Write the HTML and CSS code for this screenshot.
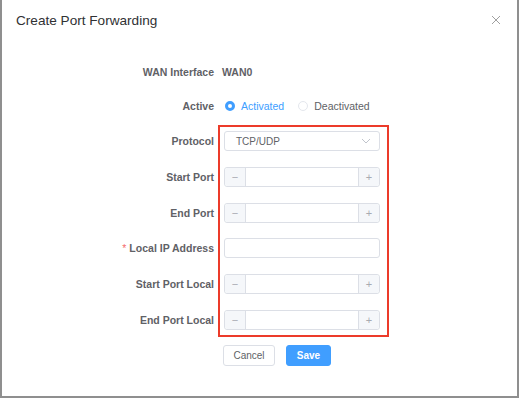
FILE: index.html
```html
<!DOCTYPE html>
<html lang="en">
<head>
  <meta charset="UTF-8">
  <title>Create Port Forwarding</title>
  <link rel="stylesheet" href="styles.css">
</head>
<body>
  <div class="dialog">
    <div class="dialog-header">
      <span class="dialog-title">Create Port Forwarding</span>
      <svg class="close" width="10" height="10" viewBox="0 0 10 10">
        <path d="M1 1L9 9M9 1L1 9" stroke="#a0a0a0" stroke-width="1" fill="none"/>
      </svg>
    </div>

    <form class="form">
      <div class="row row-wan">
        <label class="label">WAN Interface</label>
        <span class="value">WAN0</span>
      </div>

      <div class="row row-active">
        <label class="label">Active</label>
        <div class="radios">
          <span class="radio checked"><i></i>Activated</span>
          <span class="radio"><i></i>Deactivated</span>
        </div>
      </div>

      <div class="highlight"></div>

      <div class="row">
        <label class="label">Protocol</label>
        <div class="select">
          <span>TCP/UDP</span>
          <svg width="10" height="6" viewBox="0 0 10 6"><path d="M1 1L5 5L9 1" stroke="#c0c4cc" stroke-width="1" fill="none"/></svg>
        </div>
      </div>

      <div class="row">
        <label class="label">Start Port</label>
        <div class="number"><span class="btn-minus">&minus;</span><span class="num-field"></span><span class="btn-plus">+</span></div>
      </div>

      <div class="row row-tight">
        <label class="label">End Port</label>
        <div class="number"><span class="btn-minus">&minus;</span><span class="num-field"></span><span class="btn-plus">+</span></div>
      </div>

      <div class="row">
        <label class="label"><span class="req">*</span> Local IP Address</label>
        <div class="input"></div>
      </div>

      <div class="row">
        <label class="label">Start Port Local</label>
        <div class="number"><span class="btn-minus">&minus;</span><span class="num-field"></span><span class="btn-plus">+</span></div>
      </div>

      <div class="row">
        <label class="label">End Port Local</label>
        <div class="number"><span class="btn-minus">&minus;</span><span class="num-field"></span><span class="btn-plus">+</span></div>
      </div>

      <div class="actions">
        <button type="button" class="btn">Cancel</button>
        <button type="button" class="btn btn-primary">Save</button>
      </div>
    </form>
  </div>
</body>
</html>
```

FILE: styles.css
```css
body {
  margin: 0;
  font-family: 'Liberation Sans', Arial, sans-serif;
  background-color: #fff;
}
.dialog {
  width: 515px;
  height: 396px;
  border: 2px solid #8f8f8f;
  border-top: none;
  background: white;
}
.dialog-header {
  display: flex;
  justify-content: space-between;
  align-items: center;
  padding: 10px 16px 0 14px;
  height: 20px;
}
.dialog-title {
  font-size: 13.6px;
  color: #303133;
}
.form {
  position: relative;
  padding-top: 32px;
}
.row {
  display: flex;
  align-items: center;
  height: 20px;
  margin-bottom: 16px;
}
.row-wan {
  margin-bottom: 14px;
}
.row-active,
.row-tight {
  margin-bottom: 15px;
}
.label {
  width: 212px;
  text-align: right;
  padding-right: 10px;
  font-size: 10.5px;
  font-weight: bold;
  color: #5f6166;
}
.req {
  color: #f56c6c;
  font-weight: normal;
}
.value {
  font-size: 10.5px;
  font-weight: bold;
  color: #5f6166;
  margin-left: -2px;
}
.radios {
  display: flex;
  align-items: center;
  font-size: 10.5px;
  color: #606266;
  margin-left: 1px;
}
.radio {
  display: flex;
  align-items: center;
  margin-right: 14px;
}
.radio i {
  width: 10px;
  height: 10px;
  border: 1px solid #e4e7ed;
  border-radius: 50%;
  margin-right: 6px;
  box-sizing: border-box;
}
.radio.checked {
  color: #409eff;
}
.radio.checked i {
  border: 3px solid #409eff;
  background: white;
}
.select, .input, .number {
  width: 156px;
  height: 20px;
  box-sizing: border-box;
  border: 1px solid #dcdfe6;
  border-radius: 3px;
  background: white;
}
.select {
  display: flex;
  justify-content: space-between;
  align-items: center;
  padding: 0 8px 0 11px;
  font-size: 10px;
  color: #606266;
}
.number {
  display: flex;
}
.btn-minus, .btn-plus {
  width: 20px;
  display: flex;
  justify-content: center;
  align-items: center;
  background: #f5f7fa;
  color: #a8abb2;
  font-size: 11px;
}
.btn-minus {
  border-right: 1px solid #dcdfe6;
  border-radius: 3px 0 0 3px;
}
.btn-plus {
  border-left: 1px solid #dcdfe6;
  border-radius: 0 3px 3px 0;
}
.num-field {
  flex: 1;
}
.highlight {
  position: absolute;
  left: 216px;
  top: 95px;
  width: 167px;
  height: 208px;
  border: 2px solid #ec3b2a;
  pointer-events: none;
}
.actions {
  display: flex;
  gap: 11px;
  padding-left: 221px;
  margin-top: -1px;
}
.btn {
  height: 21px;
  width: 52px;
  border: 1px solid #dcdfe6;
  border-radius: 3px;
  background: white;
  font-family: inherit;
  font-size: 10px;
  color: #606266;
  padding: 0;
}
.btn-primary {
  width: 45px;
  background: #409eff;
  border-color: #409eff;
  color: white;
  font-weight: bold;
}
```
